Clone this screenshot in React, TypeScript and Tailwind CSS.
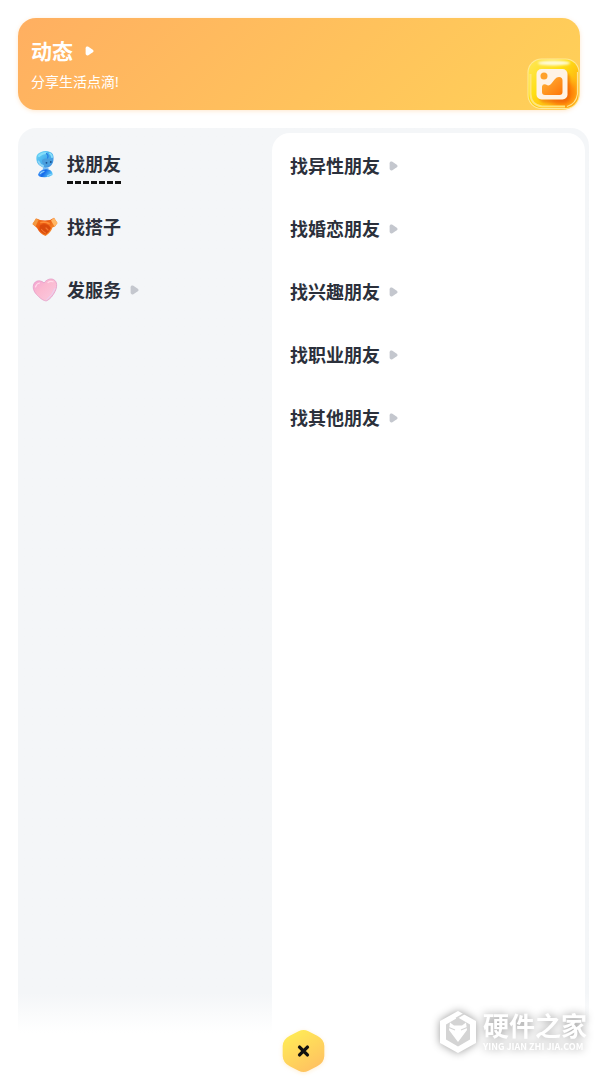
const friendTypes = ['找异性朋友', '找婚恋朋友', '找兴趣朋友', '找职业朋友', '找其他朋友'];

function Arrow({ className }: { className: string }) {
  return (
    <svg className={className} width="9" height="10" viewBox="0 0 9 10" aria-hidden="true">
      <path d="M0.6 2.4C0.6 0.8 2 0.2 3.4 0.8L7.8 3.7C8.8 4.5 8.8 5.5 7.8 6.3L3.4 9.2C2 9.8 0.6 9.2 0.6 7.6Z" fill="currentColor" />
    </svg>
  );
}

function PhotoIcon() {
  return (
    <svg width="53" height="52" viewBox="0 0 53 52" aria-hidden="true">
      <defs>
        <linearGradient id="tile" x1="0" y1="0" x2="1" y2="1">
          <stop offset="0" stopColor="#ffe75c" />
          <stop offset="0.4" stopColor="#ffdf14" />
          <stop offset="0.75" stopColor="#ffaf12" />
          <stop offset="1" stopColor="#ffc62a" />
        </linearGradient>
        <radialGradient id="glow" cx="0.68" cy="0.7" r="0.42">
          <stop offset="0" stopColor="#f45c00" />
          <stop offset="0.55" stopColor="#ff8508" stopOpacity="0.8" />
          <stop offset="1" stopColor="#ffb515" stopOpacity="0" />
        </radialGradient>
        <linearGradient id="hill" x1="0" y1="0" x2="1" y2="1">
          <stop offset="0" stopColor="#ffb53a" />
          <stop offset="1" stopColor="#ff7508" />
        </linearGradient>
        <filter id="soft" x="-20%" y="-80%" width="140%" height="260%">
          <feGaussianBlur stdDeviation="0.8" />
        </filter>
      </defs>
      <rect x="0.5" y="0.5" width="52" height="50.5" rx="14" fill="#ffe996" />
      <rect x="1.5" y="1.5" width="50" height="48.5" rx="13" fill="url(#tile)" />
      <rect x="1.5" y="1.5" width="50" height="48.5" rx="13" fill="url(#glow)" />
      <ellipse cx="27" cy="5" rx="16" ry="2.5" fill="#fffbd8" filter="url(#soft)" />
      <path d="M3.5 16V36Q4 47 15 48.5H38" fill="none" stroke="#ffe578" strokeWidth="2" />
      <path d="M50.5 14V36Q49 46 40 48.5" fill="none" stroke="#ffe391" strokeWidth="1.2" />
      <rect x="12" y="14" width="31" height="31" rx="6" fill="#e85c08" opacity="0.45" filter="url(#soft)" />
      <rect x="9.5" y="11" width="31" height="30.5" rx="5" fill="#fff3e6" />
      <circle cx="17" cy="18" r="3.5" fill="#ffa12c" />
      <path d="M15 28.5Q15.5 25.5 19 26.5Q22 28.5 24 26L28 21Q29.500 19 32 19Q35.500 19 35.500 22.500V34Q35.500 37 32.500 37H18Q15 37 15 34Z" fill="url(#hill)" />
    </svg>
  );
}

function RobotIcon() {
  return (
    <svg width="26" height="28" viewBox="0 0 26 28" aria-hidden="true">
      <defs>
        <linearGradient id="head" x1="0" y1="0" x2="1" y2="1">
          <stop offset="0" stopColor="#72dcf6" />
          <stop offset="0.45" stopColor="#4ab4ee" />
          <stop offset="1" stopColor="#3d86dc" />
        </linearGradient>
        <linearGradient id="body" x1="0" y1="0" x2="1" y2="0.4">
          <stop offset="0" stopColor="#66b9ff" />
          <stop offset="0.5" stopColor="#1369ea" />
          <stop offset="1" stopColor="#57c5f7" />
        </linearGradient>
      </defs>
      <path d="M4.5 10Q3.5 4 8.500 2.300Q13.500 -0.300 18 2Q22 3.500 21.500 9Q21.500 14 18 16.500Q13 19.500 8.500 16Q5 14 4.500 10Z" fill="url(#head)" />
      <path d="M10 10Q13 7.500 20 9.500L20 12Q18 16.500 13.500 15.500Q9.500 14 10 10Z" fill="#4a9fdd" />
      <path d="M7 6Q10 3 14 3M18 3.500Q20 5 20 7" fill="none" stroke="#86defa" strokeWidth="2" strokeLinecap="round" />
      <path d="M14.500 3.500Q17 5.500 15.500 8" fill="none" stroke="#2b82e4" strokeWidth="1.3" strokeLinecap="round" />
      <path d="M6.5 11.500Q7.500 14.500 11 16" fill="none" stroke="#8ed6f6" strokeWidth="2" strokeLinecap="round" />
      <circle cx="14.5" cy="12.8" r="0.9" fill="#174d8a" />
      <circle cx="18.8" cy="12" r="0.9" fill="#174d8a" />
      <path d="M11 17.500H16.500V21H10.500Z" fill="#79bdf0" />
      <path d="M10 20Q14 18.500 18 20Q21 22 20.500 25Q17 27.500 12 27.200Q6 27 6 24.500Q7 21 10 20Z" fill="url(#body)" />
      <path d="M8.500 23.500Q9.500 22 12 21.500M15.500 26Q17 24.500 19 24.500" fill="none" stroke="#90d2ff" strokeWidth="1.2" strokeLinecap="round" />
    </svg>
  );
}

function HandshakeIcon() {
  return (
    <svg width="26" height="20" viewBox="0 0 26 20" aria-hidden="true">
      <defs>
        <linearGradient id="hands" x1="0" y1="0" x2="1" y2="0.6">
          <stop offset="0" stopColor="#f98524" />
          <stop offset="0.5" stopColor="#e9560f" />
          <stop offset="1" stopColor="#f99a33" />
        </linearGradient>
      </defs>
      <path d="M0.5 7L4 1.5Q6 1.5 8 3L13 3.5L18 3L22 0.8L25.5 6L23 9.5L20.500 10.500Q19 15.500 13.500 19Q8 17 5 11Z" fill="url(#hands)" />
      <path d="M0.5 7L4 1.5L6.5 3L3.5 9.5Z" fill="#f39a42" />
      <path d="M19 3.5L22 0.8L25.5 6L22.5 9.5Z" fill="#ffb765" />
      <path d="M8 8.500Q12 6 17 8.500L19 11Q17 15.500 13.500 17.500Q9 15.500 7.500 12Z" fill="#d94a0b" />
      <path d="M9 5.500Q13 4.500 17 6.500" fill="none" stroke="#ff8d35" strokeWidth="1.8" strokeLinecap="round" />
      <path d="M9.500 12.500Q11.500 15 13.500 16M14 11L16 13" fill="none" stroke="#f0762e" strokeWidth="1.2" strokeLinecap="round" />
    </svg>
  );
}

function HeartIcon() {
  return (
    <svg width="26" height="24" viewBox="0 0 26 24" aria-hidden="true">
      <defs>
        <linearGradient id="heart" x1="0" y1="0" x2="1" y2="1">
          <stop offset="0" stopColor="#f3a1d4" />
          <stop offset="0.4" stopColor="#fbb9d0" />
          <stop offset="0.75" stopColor="#fac3d9" />
          <stop offset="1" stopColor="#dcaadb" />
        </linearGradient>
      </defs>
      <path d="M12 5C14 2 18 0 21.500 1.500C25.500 3.500 25.300 9 23 13.500C21 17.500 18 21.500 14.500 22.800C12 23.200 8.500 20.500 5.500 17.500C2.500 14.500 0.500 11 1.500 7C2.500 3.500 5.500 2.300 8.500 3C10 3.300 11.300 4 12 5Z" fill="url(#heart)" stroke="#e39dc8" strokeWidth="0.8" />
      <path d="M3.500 9Q4.500 5.500 7.500 5M16 4.500Q18.500 2.500 21 3.800" fill="none" stroke="#ffdbea" strokeWidth="1.2" strokeLinecap="round" />
      <path d="M23 10.500Q20.500 17 15 21.500" fill="none" stroke="#e8d4f3" strokeWidth="1" strokeLinecap="round" />
    </svg>
  );
}

function Watermark() {
  return (
    <div className="absolute right-5 bottom-[26px] flex items-center gap-1 text-white drop-shadow-[0_0_4px_rgba(0,0,0,0.4)]">
      <svg width="40" height="44" viewBox="0 0 40 44" aria-hidden="true">
        <path d="M19 1L37 11V33L19 43L1 33V11Z" fill="#fff" />
        <path d="M19 7.500L31 14.500V29.500L19 36.500L7 29.500V14.500Z" fill="#d4d4d4" />
        <path d="M11 12.500L15 15.500H23L27 12.500L28 20L19 32L10 20Z" fill="#fff" />
        <path d="M17 8.500L25.500 3.500" stroke="#d4d4d4" strokeWidth="1.5" />
        <path d="M10 17.500L16 20M28 17.500L22 20" stroke="#d4d4d4" strokeWidth="1.2" />
      </svg>
      <div>
        <p className="text-[26px] leading-[30px] font-bold">硬件之家</p>
        <p className="font-['Noto_Sans_CJK_SC',sans-serif] text-[9px] leading-3 font-bold">YING JIAN ZHI JIA.COM</p>
      </div>
    </div>
  );
}

export default function App() {
  return (
    <div className="relative flex min-h-screen flex-col bg-white px-[18px] pt-[18px] pb-[7px] font-['Noto_Sans','Noto_Sans_CJK_SC',sans-serif] text-[#2b303b]">
      <header className="relative mr-[9px] h-[92px] rounded-[18px] bg-[linear-gradient(135deg,#ffaf61,#ffd158)] px-[13px] pt-[19px] text-white shadow-[0_1px_4px_rgba(255,175,90,0.3)]">
        <a href="#moments" className="flex items-center gap-3">
          <h1 className="text-[21px] leading-7 font-bold">动态</h1>
          <Arrow className="text-white" />
        </a>
        <p className="mt-[5px] text-sm leading-6">分享生活点滴!</p>
        <div className="absolute right-0 bottom-0">
          <PhotoIcon />
        </div>
      </header>

      <main className="mt-[18px] -mb-1 flex flex-1 rounded-t-[18px] bg-gradient-to-t from-white to-[#f4f6f8] to-[40px] pt-[5px] pr-1">
        <nav className="-mt-px w-[254px] shrink-0 text-lg font-bold">
          <a href="#friends" className="flex h-[63px] items-center gap-[9px] pl-[14px]">
            <RobotIcon />
            <span className="relative">
              找朋友
              <span className="absolute inset-x-0 -bottom-1.5 h-[3px] bg-[repeating-linear-gradient(90deg,#111_0_6px,transparent_6px_8px)]" />
            </span>
          </a>
          <a href="#partners" className="flex h-[63px] items-center gap-[9px] pl-[14px]">
            <HandshakeIcon />
            <span>找搭子</span>
          </a>
          <a href="#services" className="flex h-[63px] items-center gap-[9px] pl-[14px]">
            <HeartIcon />
            <span>发服务</span>
            <Arrow className="text-[#c4c7ce]" />
          </a>
        </nav>

        <section className="flex-1 rounded-t-[18px] bg-white pt-px pl-[18px]">
          <ul className="text-lg font-bold">
            {friendTypes.map((name) => (
              <li key={name}>
                <a href="#list" className="flex h-[63px] items-center gap-[9px]">
                  <span>{name}</span>
                  <Arrow className="text-[#c4c7ce]" />
                </a>
              </li>
            ))}
          </ul>
        </section>
      </main>

      <button type="button" aria-label="关闭" className="relative self-center drop-shadow-[0_1px_2px_rgba(255,190,80,0.25)]">
        <svg width="43" height="44" viewBox="0 0 44 44" aria-hidden="true">
          <defs>
            <linearGradient id="close" x1="0.1" y1="0" x2="0.7" y2="1">
              <stop offset="0" stopColor="#ffef55" />
              <stop offset="1" stopColor="#ffc161" />
            </linearGradient>
          </defs>
          <path d="M17 1.7Q22 -0.7 27 1.7L36 6.5Q43 10 43.3 17V27Q43 34 36 37.5L27 42.3Q22 44.7 17 42.3L8 37.5Q1 34 0.7 27V17Q1 10 8 6.5Z" fill="url(#close)" />
          <path d="M18 18L26 26M26 18L18 26" stroke="#111" strokeWidth="3.5" strokeLinecap="round" />
        </svg>
      </button>

      <Watermark />
    </div>
  );
}
